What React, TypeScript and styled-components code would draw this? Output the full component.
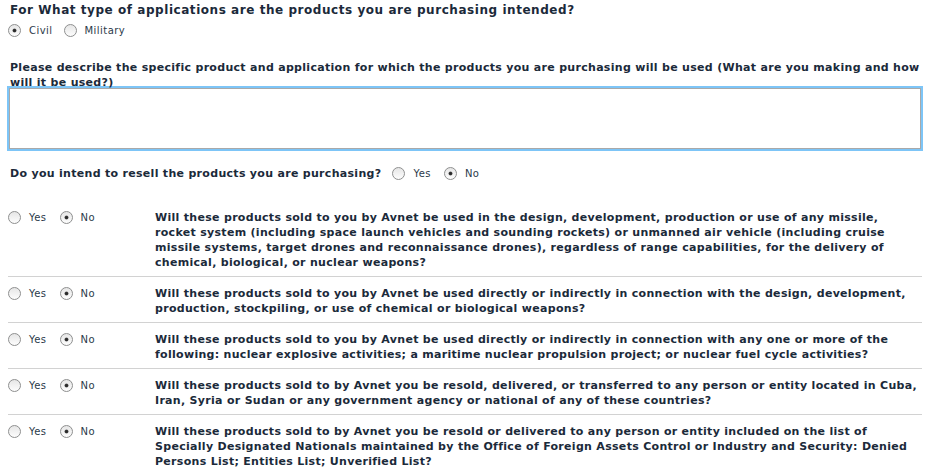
import React from "react";
import styled, { createGlobalStyle } from "styled-components";

const GlobalStyle = createGlobalStyle`
  html, body {
    margin: 0;
    padding: 0;
    background: #ffffff;
  }
  body {
    font-family: "DejaVu Sans", Verdana, sans-serif;
    color: #1b2a3a;
  }
`;

const Page = styled.div`
  width: 928px;
  box-sizing: border-box;
  padding: 3px 6px 0 8px;
`;

const Question = styled.div<{ $large?: boolean }>`
  font-size: ${({ $large }) => ($large ? "12px" : "11px")};
  letter-spacing: ${({ $large }) => ($large ? "0.55px" : "0.3px")};
  font-weight: bold;
  line-height: 15px;
  padding-left: 2px;
`;

const OptionRow = styled.div<{ $inline?: boolean }>`
  display: flex;
  align-items: center;
  height: 15px;
  margin: ${({ $inline }) => ($inline ? "0" : "5px 0 0")};
`;

const Option = styled.label<{ $gap: number }>`
  display: flex;
  align-items: center;
  gap: 8px;
  margin-right: ${({ $gap }) => $gap}px;
  font-size: 10px;
  letter-spacing: 0.45px;
  line-height: 15px;
  font-weight: normal;
  color: #2b3a4a;
`;

const Radio = styled.span<{ $checked?: boolean }>`
  position: relative;
  width: 13px;
  height: 13px;
  box-sizing: border-box;
  border-radius: 50%;
  border: 1px solid #8e8f8f;
  background: linear-gradient(#e6e6e6, #fdfdfd);
  flex-shrink: 0;

  &::after {
    content: "";
    display: ${({ $checked }) => ($checked ? "block" : "none")};
    position: absolute;
    left: 4px;
    top: 4px;
    width: 3px;
    height: 3px;
    border-radius: 50%;
    background: #2a2a2a;
    box-shadow: 0 0 0 0.5px #555;
  }
`;

const Section = styled.div<{ $top: number }>`
  margin-top: ${({ $top }) => $top}px;
`;

const TextBox = styled.textarea`
  display: block;
  box-sizing: border-box;
  width: 912px;
  height: 61px;
  margin: -2px 0 0 1px;
  border: 1px solid #a9a9a9;
  box-shadow: 0 0 0 2px #7dc5f7;
  outline: none;
  resize: none;
  font-family: inherit;
`;

const InlineQuestion = styled.div`
  display: flex;
  align-items: center;
  gap: 11px;
`;

const Rows = styled.div`
  margin-top: 20px;
`;

const Row = styled.div`
  display: grid;
  grid-template-columns: 147px 1fr;
  padding: 9px 0 6px;
  border-bottom: 1px solid #d2d2d2;

  &:last-child {
    border-bottom: none;
  }
`;

const RowText = styled(Question)`
  padding-left: 0;
`;

type YesNoProps = { gaps: [number, number]; value: "yes" | "no" };

const YesNo = ({ gaps, value }: YesNoProps) => (
  <OptionRow $inline>
    <Option $gap={gaps[0]}>
      <Radio $checked={value === "yes"} />
      Yes
    </Option>
    <Option $gap={gaps[1]}>
      <Radio $checked={value === "no"} />
      No
    </Option>
  </OptionRow>
);

const questions = [
  "Will these products sold to you by Avnet be used in the design, development, production or use of any missile, rocket system (including space launch vehicles and sounding rockets) or unmanned air vehicle (including cruise missile systems, target drones and reconnaissance drones), regardless of range capabilities, for the delivery of chemical, biological, or nuclear weapons?",
  "Will these products sold to you by Avnet be used directly or indirectly in connection with the design, development, production, stockpiling, or use of chemical or biological weapons?",
  "Will these products sold to you by Avnet be used directly or indirectly in connection with any one or more of the following: nuclear explosive activities; a maritime nuclear propulsion project; or nuclear fuel cycle activities?",
  "Will these products sold to by Avnet you be resold, delivered, or transferred to any person or entity located in Cuba, Iran, Syria or Sudan or any government agency or national of any of these countries?",
  "Will these products sold to by Avnet you be resold or delivered to any person or entity included on the list of Specially Designated Nationals maintained by the Office of Foreign Assets Control or Industry and Security: Denied Persons List; Entities List; Unverified List?",
];

export default function App() {
  return (
    <>
      <GlobalStyle />
      <Page>
        <Question $large>For What type of applications are the products you are purchasing intended?</Question>
        <OptionRow>
          <Option $gap={11}>
            <Radio $checked />
            Civil
          </Option>
          <Option $gap={0}>
            <Radio />
            Military
          </Option>
        </OptionRow>

        <Section $top={22}>
          <Question>
            Please describe the specific product and application for which the products you are purchasing will be used (What are you making and how will it be used?)
          </Question>
          <TextBox />
        </Section>

        <Section $top={17}>
          <InlineQuestion>
            <Question>Do you intend to resell the products you are purchasing?</Question>
            <YesNo gaps={[13, 0]} value="no" />
          </InlineQuestion>
        </Section>

        <Rows>
          {questions.map((q) => (
            <Row key={q}>
              <YesNo gaps={[13, 0]} value="no" />
              <RowText>{q}</RowText>
            </Row>
          ))}
        </Rows>
      </Page>
    </>
  );
}
